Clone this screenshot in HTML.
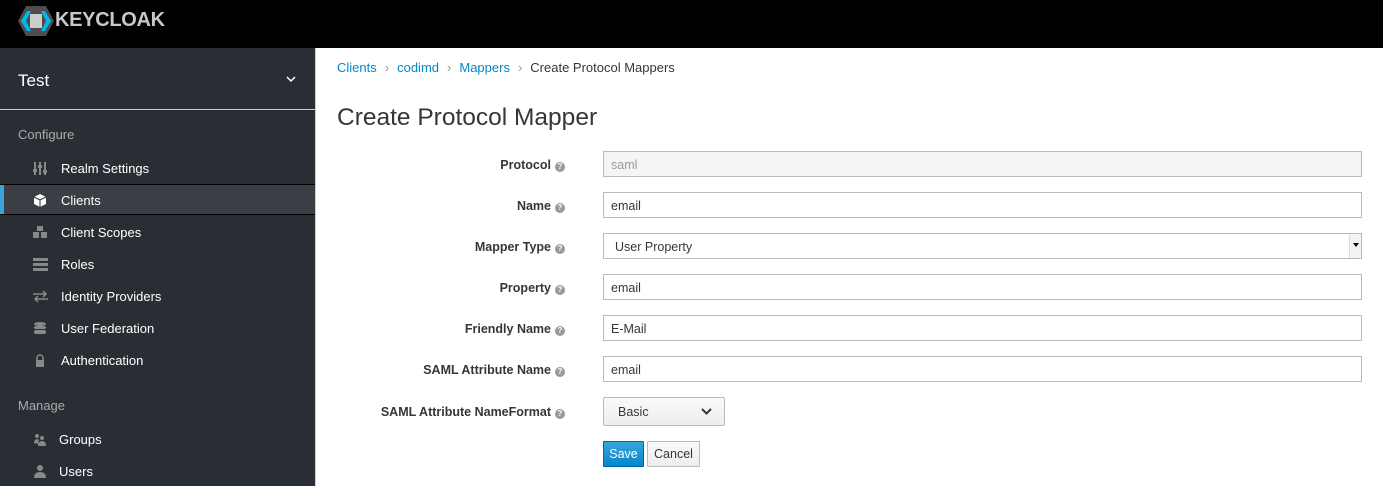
<!DOCTYPE html>
<html><head><style>
*{box-sizing:border-box;margin:0;padding:0}
body{width:1383px;height:486px;overflow:hidden;font-family:"Liberation Sans",sans-serif;font-size:12px;background:#fff;position:relative;color:#363636}
.hdr{position:absolute;left:0;top:0;width:1383px;height:48px;background:#000}
.side{position:absolute;left:0;top:48px;width:316px;height:438px;background:#292e34;border-right:1px solid #ccc}
.realm{position:absolute;left:18px;top:23px;font-size:17px;color:#fff}
.sep{position:absolute;left:0;top:61px;width:316px;height:1px;background:#ccc}
.sec{position:absolute;left:18px;font-size:13px;color:#aaa}
.item{position:absolute;left:0;width:315px;height:31px;color:#fff;font-size:13px;line-height:33px;padding-left:61px}
.item.act{background:#393f44;border-top:1px solid #000;border-bottom:1px solid #000;line-height:31px}
.item.act:before{content:"";position:absolute;left:0;top:0;width:4px;height:100%;background:#39a5dc}
.ic{position:absolute;left:33px;top:10px;width:15px;height:13px}
.bc{position:absolute;left:337px;top:60px;font-size:13px;color:#363636}
.bc a{color:#0088ce}
.bc span.s{color:#999;margin:0 8px}
h1{position:absolute;left:337px;top:104px;font-size:24.5px;font-weight:normal;color:#363636}
.lbl{position:absolute;right:818px;font-weight:bold;font-size:12.5px;color:#363636;text-align:right;white-space:nowrap}
.q{display:inline-block;width:10px;height:10px;border-radius:50%;background:#999;color:#fff;font-size:8px;line-height:10px;text-align:center;margin-left:4px;vertical-align:0}
.inp{position:absolute;left:603px;width:759px;height:26px;border:1px solid #bbb;padding-left:7px;line-height:26px;font-size:12.5px;color:#363636}
</style></head><body>
<div class="hdr">
<svg style="position:absolute;left:18px;top:6px" width="36" height="30" viewBox="0 0 36 30"><polygon points="8,0 28,0 36,15 28,30 8,30 0,15" fill="#4d4d4d"/><polygon points="3,15 9,5 13,5 8,15 13,25 9,25" fill="#00b9e4"/><polygon points="33,15 27,5 23,5 28,15 23,25 27,25" fill="#00b9e4"/><rect x="12" y="8" width="12" height="14" fill="#ccc"/></svg>
<div style="position:absolute;left:55px;top:9px;font-size:20px;font-weight:bold;color:#c8c8c8;letter-spacing:-0.3px">KEYCLOAK</div>
</div>
<div class="side">
<div class="realm">Test</div>
<svg style="position:absolute;left:286px;top:28px" width="10" height="7" viewBox="0 0 10 7"><path d="M1 1l4 4 4-4" stroke="#fff" stroke-width="1.5" fill="none"/></svg>
<div class="sep"></div>
<div class="sec" style="top:79px">Configure</div>
<div class="item" style="top:104px"><svg class="ic" viewBox="0 0 15 13"><g fill="#888"><rect x="1" y="0" width="2" height="13"/><rect x="6" y="0" width="2" height="13"/><rect x="11" y="0" width="2" height="13"/><rect x="0" y="7" width="4" height="3"/><rect x="5" y="3" width="4" height="3"/><rect x="10" y="8" width="4" height="3"/></g></svg>Realm Settings</div>
<div class="item act" style="top:136px"><svg class="ic" style="top:9px" viewBox="0 0 15 13"><path d="M7 0l6 3v7l-6 3-6-3V3z" fill="#fff"/><path d="M1 3l6 3 6-3M7 6v7" stroke="#292e34" stroke-width="1" fill="none"/></svg>Clients</div>
<div class="item" style="top:168px"><svg class="ic" viewBox="0 0 15 13"><g fill="#888"><rect x="4" y="0" width="6" height="5"/><rect x="0" y="6" width="6" height="6"/><rect x="8" y="6" width="6" height="6"/></g></svg>Client Scopes</div>
<div class="item" style="top:200px"><svg class="ic" viewBox="0 0 15 13"><g fill="#888"><rect x="0" y="0" width="15" height="3"/><rect x="0" y="5" width="15" height="3"/><rect x="0" y="10" width="15" height="3"/></g></svg>Roles</div>
<div class="item" style="top:232px"><svg class="ic" viewBox="0 0 15 13"><path d="M0 4h13M10 1l3 3-3 3M15 9H2M5 6L2 9l3 3" stroke="#888" stroke-width="1.5" fill="none"/></svg>Identity Providers</div>
<div class="item" style="top:264px"><svg class="ic" viewBox="0 0 15 13"><g fill="#888"><ellipse cx="7" cy="2" rx="6" ry="2"/><rect x="1" y="4" width="12" height="3" rx="2"/><rect x="1" y="8" width="12" height="4" rx="2"/></g></svg>User Federation</div>
<div class="item" style="top:296px"><svg class="ic" viewBox="0 0 15 13"><path d="M4 6V4a3 3 0 016 0v2" stroke="#888" stroke-width="1.5" fill="none"/><rect x="3" y="6" width="8" height="7" fill="#888"/></svg>Authentication</div>
<div class="sec" style="top:350px">Manage</div>
<div class="item" style="top:375px;padding-left:59px"><svg class="ic" viewBox="0 0 15 13"><g fill="#888"><circle cx="4" cy="3" r="2"/><circle cx="9" cy="5" r="2"/><path d="M1 10q0-4 4-4l1 1-1 4zM5 13q0-5 4-5t4 5z"/></g></svg>Groups</div>
<div class="item" style="top:407px;padding-left:59px"><svg class="ic" viewBox="0 0 15 13"><g fill="#888"><circle cx="7" cy="3" r="3"/><path d="M1 13q0-6 6-6t6 6z"/></g></svg>Users</div>
</div>
<div class="bc"><a>Clients</a><span class="s">›</span><a>codimd</a><span class="s">›</span><a>Mappers</a><span class="s">›</span>Create Protocol Mappers</div>
<h1>Create Protocol Mapper</h1>
<div class="lbl" style="top:158px">Protocol<span class="q">?</span></div>
<div class="inp" style="top:151px;background:#f5f5f5;color:#999">saml</div>
<div class="lbl" style="top:199px">Name<span class="q">?</span></div>
<div class="inp" style="top:192px">email</div>
<div class="lbl" style="top:240px">Mapper Type<span class="q">?</span></div>
<div class="inp" style="top:233px;padding-left:11px">User Property<div style="position:absolute;right:0;top:0;width:12px;height:24px;border-left:1px solid #ddd;background:#f3f3f3"><svg style="position:absolute;left:3px;top:9px" width="6" height="4"><path d="M0 0h6L3 4z" fill="#000"/></svg></div></div>
<div class="lbl" style="top:281px">Property<span class="q">?</span></div>
<div class="inp" style="top:274px">email</div>
<div class="lbl" style="top:322px">Friendly Name<span class="q">?</span></div>
<div class="inp" style="top:315px">E-Mail</div>
<div class="lbl" style="top:363px">SAML Attribute Name<span class="q">?</span></div>
<div class="inp" style="top:356px">email</div>
<div class="lbl" style="top:405px">SAML Attribute NameFormat<span class="q">?</span></div>
<div style="position:absolute;left:603px;top:397px;width:122px;height:29px;border:1px solid #bbb;border-radius:2px;background:linear-gradient(#fafafa,#ededed);padding-left:14px;line-height:28px;font-size:12.5px">Basic<svg style="position:absolute;right:12px;top:10px" width="11" height="7" viewBox="0 0 11 7"><path d="M1 1l4.5 4.5L10 1" stroke="#363636" stroke-width="2" fill="none"/></svg></div>
<div style="position:absolute;left:603px;top:441px;width:41px;height:26px;background:linear-gradient(#39a5dc,#0088ce);border:1px solid #00659c;border-radius:1px;color:#fff;font-size:12.5px;line-height:25px;text-align:center">Save</div>
<div style="position:absolute;left:647px;top:441px;width:53px;height:26px;background:linear-gradient(#fafafa,#ededed);border:1px solid #bbb;border-radius:1px;font-size:12.5px;line-height:25px;text-align:center">Cancel</div>
</body></html>
